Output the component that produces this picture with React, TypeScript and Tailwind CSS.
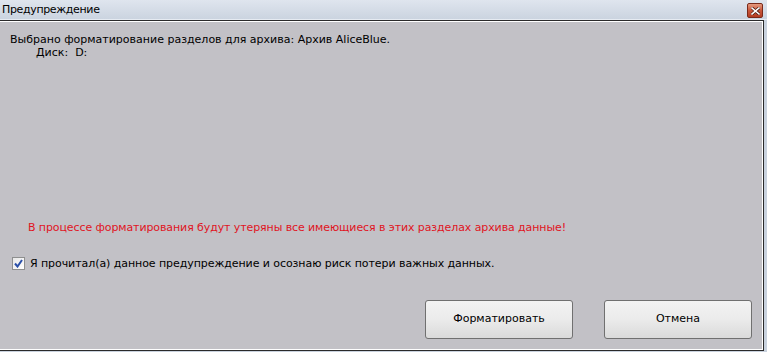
import React from 'react';

const font = { fontFamily: '"DejaVu Sans", Verdana, sans-serif' };

export default function App() {
  return (
    <div
      className="w-[767px] h-[352px] flex flex-col bg-[#c9d2de] overflow-hidden text-[11px] text-black"
      style={font}
    >
      {/* Title bar */}
      <div className="h-[20px] shrink-0 flex items-center justify-between pl-[2px] pr-[4px] bg-gradient-to-b from-[#dfe5ee] to-[#cbd4e0] border-b border-[#e6ebf2]">
        <span className="text-[11px] tracking-[-0.35px] leading-none">Предупреждение</span>
        <div className="w-[16px] h-[15px] mt-[2px] rounded-[2px] border border-[#7a2a1a] bg-gradient-to-b from-[#e49a80] via-[#c9563a] to-[#b33c22] flex items-center justify-center">
          <svg width="9" height="8" viewBox="0 0 9 8">
            <path d="M1 1 L8 7 M8 1 L1 7" stroke="#4a1a10" strokeWidth="3" strokeLinecap="square" />
            <path d="M1 1 L8 7 M8 1 L1 7" stroke="#ffffff" strokeWidth="1.6" strokeLinecap="square" />
          </svg>
        </div>
      </div>

      {/* Body */}
      <div className="flex-1 mr-[3px] mb-[1px] border-t border-r border-b border-[#2a2a2a] flex">
        <div className="flex-1 border-t border-r border-b border-white bg-[#c2c1c6] flex flex-col pl-[10px] pr-[10px] pt-[11px] pb-[10px]">
          <p className="leading-[13px]">Выбрано форматирование разделов для архива: Архив AliceBlue.</p>
          <p className="leading-[13px] pl-[26px]">Диск:&nbsp; D:</p>

          <p className="mt-[162px] pl-[18px] leading-[13px] tracking-[-0.1px] text-[#e0141e]">
            В процессе форматирования будут утеряны все имеющиеся в этих разделах архива данные!
          </p>

          <label className="mt-[23px] flex items-center gap-[5px] pl-[2px]">
            <span className="w-[13px] h-[13px] border border-[#8e8f8f] bg-gradient-to-br from-[#e8e8e8] to-[#ffffff] flex items-center justify-center">
              <svg width="9" height="9" viewBox="0 0 9 9">
                <path d="M1 4.5 L3.5 7.5 L8 1" fill="none" stroke="#2a4fa8" strokeWidth="2" />
              </svg>
            </span>
            <span className="leading-[13px] tracking-[-0.07px]">Я прочитал(а) данное предупреждение и осознаю риск потери важных данных.</span>
          </label>

          <div className="mt-auto flex justify-end gap-[31px]">
            <button className="w-[148px] h-[39px] rounded-[3px] border border-[#707070] bg-gradient-to-b from-[#f3f3f3] via-[#ebebeb] to-[#dadada] text-[11px]">
              Форматировать
            </button>
            <button className="w-[148px] h-[39px] rounded-[3px] border border-[#707070] bg-gradient-to-b from-[#f3f3f3] via-[#ebebeb] to-[#dadada] text-[11px]">
              Отмена
            </button>
          </div>
        </div>
      </div>
    </div>
  );
}
